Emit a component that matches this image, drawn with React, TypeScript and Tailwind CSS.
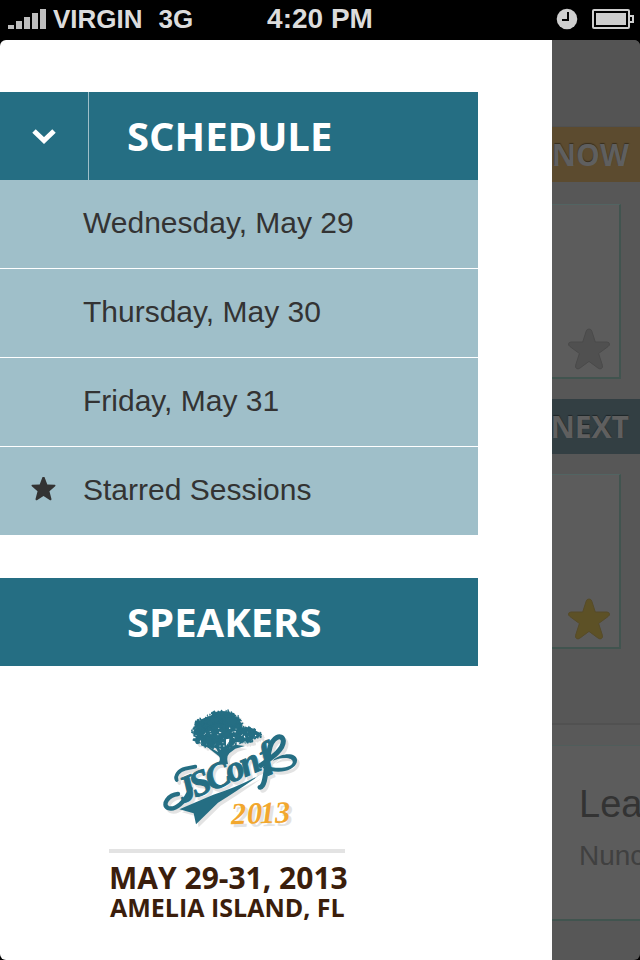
import React from "react";

const days = ["Wednesday, May 29", "Thursday, May 30", "Friday, May 31"];

const STAR =
  "M20 1 Q22.2 1 22.8 3.2 L26.3 14 L38 14 Q40.3 14.2 40.5 16 Q40.5 17.6 39 18.6 L29.6 25.5 L33.4 37.3 Q34 39.6 32.4 40.6 Q31 41.4 29.2 40.2 L20 33.4 L10.8 40.2 Q9 41.4 7.6 40.6 Q6 39.6 6.6 37.3 L10.4 25.5 L1 18.6 Q-.5 17.6 -.5 16 Q-.3 14.2 2 14 L13.7 14 L17.2 3.2 Q17.8 1 20 1 Z";

const SHARP_STAR =
  "M20 0 Q21.4 0 22 2 L26.4 13.6 L39 14.2 Q41 14.8 39.6 16.6 L30 24.8 L33.4 38 Q33.4 41 31 40 L20 33 L9 40 Q6.600 41 6.6 38 L10 24.8 L.4 16.6 Q-1 14.800 1 14.2 L13.6 13.6 L18 2 Q18.6 0 20 0 Z";

const clusters: [number, number, number, number][] = [
  [218, 64, 46, 32],
  [186, 76, 42, 30],
  [245, 78, 32, 30],
  [163, 96, 36, 22],
  [205, 98, 44, 30],
  [250, 104, 40, 26],
  [288, 98, 34, 18],
  [306, 106, 26, 11],
  [155, 120, 24, 10],
  [185, 130, 30, 14],
  [222, 130, 32, 18],
  [150, 72, 16, 12],
  [216, 42, 30, 9],
  [282, 122, 24, 6],
];

function foliage() {
  let seed = 11;
  const rand = () => {
    seed = (seed * 16807) % 2147483647;
    return seed / 2147483647;
  };
  let leaves = "";
  let gaps = "";
  const speck = (x: number, y: number, r: number) =>
    `M${x.toFixed(1)} ${(y - r).toFixed(1)}l${r} ${(r * 0.7).toFixed(1)}l${(-r * 0.4).toFixed(1)} ${r}l${-r} ${(-r * 0.3).toFixed(1)}z`;
  clusters.forEach(([cx, cy, rx, ry]) => {
    for (let i = 0; i < 46; i++) {
      const a = rand() * Math.PI * 2;
      const d = 0.85 + rand() * 0.25;
      leaves += speck(cx + Math.cos(a) * rx * d, cy + Math.sin(a) * ry * d, 3 + Math.round(rand() * 2));
    }
    for (let i = 0; i < 4; i++) {
      const a = rand() * Math.PI * 2;
      const d = rand() * 0.95;
      const y = cy + Math.sin(a) * ry * d + 8;
      if (y > 82) gaps += speck(cx + Math.cos(a) * rx * d, y, 1 + Math.round(rand() * 2));
    }
  });
  return { leaves, gaps };
}

const { leaves, gaps } = foliage();

function LogoArt({ main, accent, gap }: { main: string; accent: string; gap: string }) {
  return (
    <g fill={main}>
      {clusters.map(([cx, cy, rx, ry], i) => (
        <ellipse key={i} cx={cx} cy={cy} rx={rx * 0.94} ry={ry * 0.94} />
      ))}
      <path d={leaves} />
      <path d={gaps} fill={gap} />
      <path d="M228 118 l10 -2 l-2 16 l-8 8 z M262 126 l8 2 l-10 8 z" fill={gap} />
      <path d="M176 140 L204 156 L194 136 L212 150 L212 128 L222 146 L238 124 L232 148 L256 134 L284 138 L256 146 L238 160 Q228 170 234 192 L204 194 Q214 176 206 168 L178 146 Z" />
      {/* tail swash on the left, loop and crossbar on the right */}
      <path
        d="M122 266 C106 306 76 332 54 324 C34 314 56 284 84 282"
        fill="none"
        stroke={main}
        strokeWidth="13"
        strokeLinecap="round"
      />
      <path
        d="M80 240 C74 228 86 210 106 206 L136 200"
        fill="none"
        stroke={main}
        strokeWidth="11"
        strokeLinecap="round"
      />
      <path
        d="M330 262 C350 258 346 196 358 150 C366 110 396 100 400 122 C402 148 366 172 332 196"
        fill="none"
        stroke={main}
        strokeWidth="15"
        strokeLinecap="round"
      />
      <path d="M342 194 C376 208 414 206 426 192 C436 178 412 166 368 182 C396 156 440 158 441 180 C442 210 386 228 338 204 Z" />
      <path d="M88 328 L190 284 Q262 262 328 226 Q262 272 204 308 L138 373 L131 340 Z" />
      <g transform="translate(98 310) rotate(-23)" fontSize="108" className="font-['Liberation_Serif'] font-bold italic">
        <text x="0 42 92 156 202 268" stroke={main} strokeWidth="3">
          JSConf
        </text>
      </g>
      <text
        x="244 292 330 376"
        y="370"
        fontSize="92"
        fill={accent}
        transform="rotate(-2 330 370)"
        className="font-['Liberation_Serif'] font-bold italic"
      >
        2013
      </text>
    </g>
  );
}

function Logo() {
  return (
    <svg viewBox="0 0 480 405" className="h-[135px] w-[160px]" role="img" aria-label="JSConf 2013">
      <g transform="translate(8 9)" aria-hidden="true">
        <LogoArt main="#e3e3e3" accent="#e3e3e3" gap="#e3e3e3" />
      </g>
      <LogoArt main="#256e83" accent="#f2a72e" gap="#ffffff" />
    </svg>
  );
}

function Star({ fill, stroke }: { fill: string; stroke: string }) {
  return (
    <svg viewBox="-1 0 42 42" className="h-[42px] w-[42px]" aria-hidden="true">
      <path d={STAR} fill={fill} stroke={stroke} />
    </svg>
  );
}

function StatusBar() {
  return (
    <header className="grid h-10 shrink-0 grid-cols-[1fr_auto_1fr] items-center px-2 pb-[2px] font-['Liberation_Sans',sans-serif] text-[26px] leading-[38px] font-bold text-[#dcdcdc]">
      <div className="flex items-center">
        <svg viewBox="0 0 38 20" className="h-5 w-[38px] fill-[#bebebe]" aria-label="Signal strength">
          <path d="M0 16h6v4H0zM8 12h6v8H8zM16 8h6v12h-6zM24 4h6v16h-6zM32 0h6v20h-6z" />
        </svg>
        <span className="ml-[7px]">VIRGIN</span>
        <span className="ml-4">3G</span>
      </div>
      <time className="text-[28px]">4:20 PM</time>
      <div className="flex items-center justify-end gap-[14px]">
        <svg viewBox="0 0 22 22" className="h-[22px] w-[22px]" aria-label="Alarm">
          <circle cx="11" cy="11" r="10.3" fill="#cecece" />
          <path d="M12 4v8H6" fill="none" stroke="#000" strokeWidth="2" />
        </svg>
        <svg viewBox="0 0 42 20" className="-mr-[2px] h-5 w-[42px]" aria-label="Battery">
          <rect x="1" y="1" width="36" height="18" rx="1" fill="none" stroke="#cecece" strokeWidth="2" />
          <rect x="4" y="4" width="30" height="12" fill="#cecece" />
          <path d="M38 7h3v6h-3" fill="none" stroke="#cecece" strokeWidth="2" />
        </svg>
      </div>
    </header>
  );
}

function Drawer() {
  const heading = "font-['Open_Sans',sans-serif] text-[40px] font-bold text-white";
  const row =
    "flex h-[88px] w-full items-center bg-[#9fbfc9] pb-1 text-left font-['Liberation_Sans',sans-serif] text-[30px] text-[#333333]";
  return (
    <nav className="min-w-0 flex-1 bg-white pt-[52px] pr-[74px]">
      <div className="flex h-[88px] bg-[#256e83]">
        <button
          aria-label="Collapse schedule"
          className="flex w-[89px] items-center justify-center border-r border-[#9fbfc9]"
        >
          <svg viewBox="0 0 24 16" className="h-4 w-6" aria-hidden="true">
            <path d="M2 3l10 9.500L22 3" fill="none" stroke="#fff" strokeWidth="5" />
          </svg>
        </button>
        <button className={`${heading} flex-1 pl-[38px] text-left`}>SCHEDULE</button>
      </div>
      <ul className="flex flex-col gap-px">
        {days.map((day) => (
          <li key={day}>
            <button className={`${row} pl-[83px]`}>{day}</button>
          </li>
        ))}
        <li>
          <button className={row}>
            <svg viewBox="-1 1 42 42" className="mr-[27px] ml-[31px] h-[25px] w-[25px] fill-[#333333]" aria-hidden="true">
              <path d={SHARP_STAR} />
            </svg>
            Starred Sessions
          </button>
        </li>
      </ul>
      <button className={`${heading} mt-[43px] flex h-[88px] w-full items-center bg-[#256e83] pl-[127px]`}>
        SPEAKERS
      </button>
      <footer className="ml-[109px] flex w-[240px] flex-col pt-[34px] font-['Open_Sans',sans-serif] font-bold whitespace-nowrap text-[#3b1e0c]">
        <div className="ml-[41px]">
          <Logo />
        </div>
        <hr className="mt-[14px] w-[236px] border-t-4 border-[#e3e3e3]" />
        <p className="mt-[10px] text-[30px] leading-[30px]">MAY 29-31, 2013</p>
        <p className="pl-px text-[25px] leading-[28px]">AMELIA ISLAND, FL</p>
      </footer>
    </nav>
  );
}

function SessionsPane() {
  const bar =
    "flex h-[55px] items-center justify-end pr-[11px] font-['Open_Sans',sans-serif] text-[30px] font-bold text-[#5f5f5f] [text-shadow:0_-1px_1px_#00000066]";
  const card =
    "mr-[19px] flex h-[175px] items-end justify-end border-t border-r-2 border-b-2 border-t-[#526462] border-r-[#41544f] border-b-[#41544f] bg-[#5c5c5c] pr-[9px] pb-[7px]";
  return (
    <section className="flex w-[88px] shrink-0 flex-col overflow-hidden bg-[#575757]">
      <div className="h-[87px] shrink-0 border-b border-[#505050] bg-[#545454]" />
      <h2 className={`${bar} bg-[#5c4b2f]`}>NOW</h2>
      <article className={`${card} mt-[22px]`}>
        <Star fill="#505050" stroke="#4a4a4a" />
      </article>
      <h2 className={`${bar} mt-5 bg-[#333f43]`}>NEXT</h2>
      <article className={`${card} mt-5`}>
        <Star fill="#5d5126" stroke="#564b29" />
      </article>
      <div className="mt-[74px] h-[22px] border-t-2 border-[#515151] bg-[#595959]" />
      <article className="h-[176px] border-t border-b-2 border-t-[#505d5b] border-b-[#41544f] bg-[#5c5c5c] pt-[34px] pl-[27px] font-['Liberation_Sans',sans-serif] whitespace-nowrap">
        <h3 className="text-[38px] leading-[48px] text-[#333333]">Lea</h3>
        <p className="mt-1 text-[28px] leading-[48px] text-[#404040]">Nunc</p>
      </article>
    </section>
  );
}

export default function App() {
  return (
    <div className="flex min-h-screen flex-col bg-black">
      <StatusBar />
      <main className="flex flex-1 overflow-hidden rounded-md">
        <Drawer />
        <SessionsPane />
      </main>
    </div>
  );
}
